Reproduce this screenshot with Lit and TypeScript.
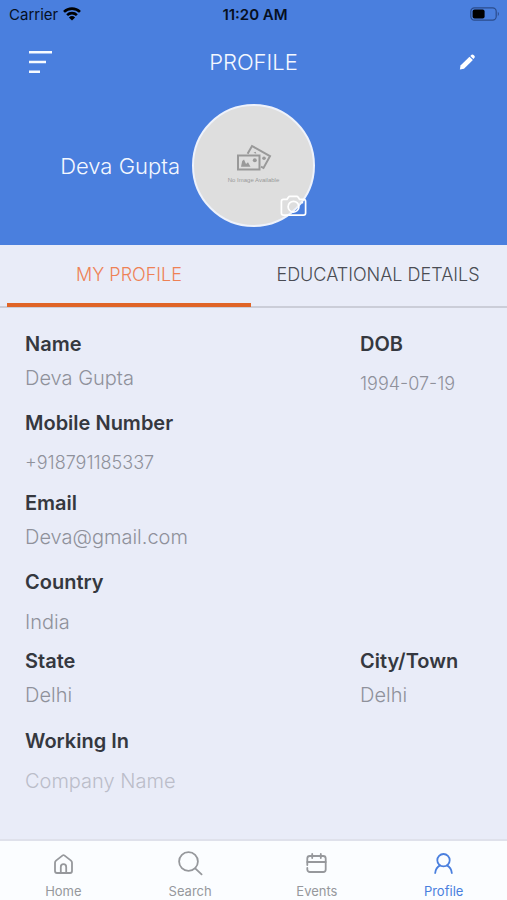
import { LitElement, html, css, svg } from "lit";
import { customElement, property, state } from "lit/decorators.js";
import { classMap } from "lit/directives/class-map.js";

interface Field {
  id: string;
  label: string;
  value: string;
  placeholder?: string;
  fixed?: boolean;
  low?: boolean;
  digits?: boolean;
}

const ROWS: Field[][] = [
  [
    { id: "name", label: "Name", value: "Deva Gupta" },
    { id: "dob", label: "DOB", value: "1994-07-19", fixed: true, low: true, digits: true },
  ],
  [{ id: "mobile", label: "Mobile Number", value: "+918791185337", fixed: true, low: true, digits: true }],
  [{ id: "email", label: "Email", value: "Deva@gmail.com" }],
  [{ id: "country", label: "Country", value: "India", fixed: true, low: true }],
  [
    { id: "state", label: "State", value: "Delhi" },
    { id: "city", label: "City/Town", value: "Delhi" },
  ],
  [{ id: "work", label: "Working In", value: "", placeholder: "Company Name", low: true }],
];

@customElement("status-bar")
export class StatusBar extends LitElement {
  static styles = css`
    :host {
      display: grid;
      grid-template-columns: 1fr auto 1fr;
      align-items: center;
      height: 28px;
      padding: 0 6px 0 9px;
      color: #06101f;
      font-size: 15px;
    }
    .carrier {
      display: flex;
      align-items: center;
      gap: 5px;
    }
    .time {
      font-weight: 600;
    }
    .battery {
      justify-self: end;
    }
    svg {
      display: block;
    }
  `;
  render() {
    return html`
      <span class="carrier">
        Carrier
        <svg width="18" height="14" viewBox="0 0 18 14" aria-hidden="true">
          <g fill="none" stroke="#000" stroke-width="2.6">
            <path d="M1 4.9 A11.4 11.4 0 0 1 17 4.9" />
            <path d="M4.1 8.1 A7 7 0 0 1 13.9 8.1" />
          </g>
          <path d="M9 13.6 L5.9 10.5 A4.5 4.5 0 0 1 12.1 10.5 Z" fill="#000" />
        </svg>
      </span>
      <span class="time">11:20 AM</span>
      <svg class="battery" width="31" height="14" viewBox="0 0 31 14" aria-hidden="true">
        <rect x="0.8" y="0.8" width="25.4" height="12.4" rx="3.6" fill="none" stroke="#2b4c8c" stroke-width="1.2" />
        <rect x="2.6" y="2.6" width="12" height="8.8" rx="2" fill="#000" />
        <path d="M27.8 4.8 Q30 7 27.8 9.2 Z" fill="#2b4c8c" />
      </svg>
    `;
  }
}

@customElement("profile-header")
export class ProfileHeader extends LitElement {
  @property() name = "";
  static styles = css`
    :host {
      display: block;
      height: 245px;
      background: #4a7fde;
      color: #f4f8ff;
    }
    .bar {
      display: grid;
      grid-template-columns: 1fr auto 1fr;
      align-items: center;
      height: 68px;
      padding: 0 29px;
    }
    h1 {
      margin: 0;
      font-size: 22px;
      font-weight: 300;
    }
    button {
      display: block;
      padding: 0;
      border: 0;
      background: none;
      cursor: pointer;
    }
    svg {
      display: block;
    }
    .edit {
      justify-self: end;
    }
    .person {
      display: grid;
      grid-template-columns: 1fr auto 1fr;
      align-items: center;
      margin-top: 8px;
    }
    .name {
      justify-self: end;
      padding-right: 12px;
      font-size: 22px;
      font-weight: 300;
    }
    .avatar {
      position: relative;
      box-sizing: border-box;
      width: 123px;
      height: 123px;
      padding-bottom: 4px;
      border: 2px solid #eef2fb;
      border-radius: 50%;
      background: #dedede;
      display: flex;
      flex-direction: column;
      align-items: center;
      justify-content: center;
      gap: 6px;
      color: #999;
      font: 6px "Liberation Sans", sans-serif;
    }
    .camera {
      position: absolute;
      right: 6px;
      bottom: 8px;
    }
  `;
  render() {
    return html`
      <status-bar></status-bar>
      <div class="bar">
        <button aria-label="Menu">
          <svg width="24" height="24" viewBox="0 0 24 24">
            <path d="M0 2.3H23M0 12H17M0 21.7H11" stroke="#f8fbff" stroke-width="2.4" />
          </svg>
        </button>
        <h1>PROFILE</h1>
        <button class="edit" aria-label="Edit">
          <svg width="20" height="20" viewBox="0 0 20 20" fill="#fff">
            <path d="M1.9 17.4 L2.5 13.5 L11.5 4.8 L14.9 8.1 L6 16.7 Z" />
            <path d="M12.3 4 L13.6 2.8 Q14.6 2 15.6 2.9 L16.4 3.8 Q17.3 4.8 16.5 5.8 L15.4 7.1 Z" />
          </svg>
        </button>
      </div>
      <div class="person">
        <span class="name">${this.name}</span>
        <div class="avatar">
          <svg width="36" height="27" viewBox="0 0 36 27" aria-hidden="true">
            <g fill="none" stroke="#999" stroke-width="2">
              <path d="M11.6 9.8 L16 2 L34 12.2 L27.5 24 L25 22.6" />
              <rect x="2" y="11.5" width="21.5" height="14" />
            </g>
            <path d="M5 22.8 L6.2 17 L8 15.6 L10 20 L12 18.2 L14.5 22.8 Z" fill="#999" />
            <circle cx="18.8" cy="16.3" r="2" fill="#999" />
            <circle cx="28" cy="14.2" r="1.8" fill="#999" />
            <path d="M17.5 8.8 l2.2 -1 l0.6 2 z" fill="#999" />
          </svg>
          <span>No Image Available</span>
          <button class="camera" aria-label="Change photo">
            <svg width="27" height="22" viewBox="0 0 27 22" fill="none" stroke="#fff" stroke-width="1.7">
              <path
                d="M3.5 4.3 H7 L8.6 2 Q9 1.3 9.8 1.3 H16.8 Q17.6 1.3 18 2 L19.6 4.3 H23.5 Q25.6 4.3 25.6 6.4 V18 Q25.6 20.1 23.5 20.1 H3.5 Q1.4 20.1 1.4 18 V6.4 Q1.4 4.3 3.5 4.3 Z"
              />
              <circle cx="13.5" cy="11.7" r="5.4" />
              <path d="M21.6 7.6 h1.6" />
            </svg>
          </button>
        </div>
      </div>
    `;
  }
}

@customElement("profile-tabs")
export class ProfileTabs extends LitElement {
  @state() private active = 0;
  static styles = css`
    :host {
      display: block;
      padding: 0 7px;
      border-bottom: 2px solid #cbcdd8;
    }
    .tabs {
      display: grid;
      grid-template-columns: 1fr 1fr;
      gap: 5px;
      margin-bottom: -1px;
    }
    button {
      height: 62px;
      padding: 1px 0 0;
      border: 0;
      border-bottom: 4px solid transparent;
      background: none;
      color: #4a4c54;
      font: 300 18px Inter, sans-serif;
      white-space: nowrap;
      cursor: pointer;
    }
    .on {
      border-bottom-color: #e06427;
      color: #ee8155;
    }
  `;
  render() {
    return html`<div class="tabs" role="tablist">
      ${["MY PROFILE", "EDUCATIONAL DETAILS"].map(
        (t, i) => html`<button
          role="tab"
          aria-selected=${i === this.active}
          class=${classMap({ on: i === this.active })}
          @click=${() => (this.active = i)}
        >
          ${t}
        </button>`
      )}
    </div>`;
  }
}

@customElement("profile-form")
export class ProfileForm extends LitElement {
  static styles = css`
    :host {
      display: block;
    }
    form {
      box-sizing: border-box;
      height: 100%;
      display: grid;
      grid-auto-rows: 1fr;
      padding: 24px 25px 31px;
    }
    .row {
      display: grid;
      grid-template-columns: 335fr 122fr;
    }
    .field {
      display: flex;
      flex-direction: column;
      gap: 10px;
      min-width: 0;
    }
    .low {
      gap: 16px;
    }
    label {
      color: #35383f;
      font-size: 20px;
      line-height: 24px;
      font-weight: 600;
    }
    input {
      box-sizing: border-box;
      width: 100%;
      height: 24px;
      padding: 0;
      border: 0;
      outline: 0;
      background: none;
      color: #8f919b;
      font: 300 20px/24px Inter, sans-serif;
    }
    .digits input {
      font-size: 18px;
    }
    input::placeholder {
      color: #bbbdc9;
      opacity: 1;
    }
  `;
  render() {
    return html`<form>
      ${ROWS.map(
        (row) => html`<div class="row">
          ${row.map(
            (f) => html`<div class=${classMap({ field: true, low: !!f.low, digits: !!f.digits })}>
              <label for=${f.id}>${f.label}</label>
              <input id=${f.id} .value=${f.value} placeholder=${f.placeholder ?? ""} ?readonly=${!!f.fixed} />
            </div>`
          )}
        </div>`
      )}
    </form>`;
  }
}

const NAV = [
  {
    label: "Home",
    icon: svg`<path d="M5 9.6 L11.7 4.4 Q12.5 3.8 13.3 4.4 L20 9.6 Q21 10.5 21 11.8 V20 Q21 22 19 22 H6 Q4 22 4 20 V11.8 Q4 10.5 5 9.6 Z"/><path d="M9.8 22 V16 Q9.8 13.2 12.5 13.2 Q15.2 13.2 15.2 16 V22"/>`,
  },
  {
    label: "Search",
    icon: svg`<circle cx="10.5" cy="10.5" r="9.4"/><path d="M17.2 17.4 L23.6 23.4"/>`,
  },
  {
    label: "Events",
    icon: svg`<path d="M3.3 14 V7.5 Q3.3 5 5.8 5 H19.2 Q21.7 5 21.7 7.5 V18.5 Q21.7 21 19.2 21 H5.8 Q3.7 21 3.3 18.6 V17"/><path d="M3.3 11 H21.7 M8.2 3 V7 M16.8 3 V7"/>`,
  },
  {
    label: "Profile",
    icon: svg`<circle cx="12.5" cy="9.2" r="6.2"/><path d="M4.2 22 Q4.8 16.6 9 14.4 M20.8 22 Q20.2 16.6 16 14.4"/>`,
  },
];

@customElement("bottom-nav")
export class BottomNav extends LitElement {
  static styles = css`
    nav {
      display: grid;
      grid-template-columns: repeat(4, 1fr);
      height: 59px;
      border-top: 2px solid #dfe1eb;
      background: #fbfdff;
    }
    a {
      display: flex;
      flex-direction: column;
      align-items: center;
      gap: 7px;
      padding-top: 10px;
      color: #96989c;
      font-size: 13px;
      line-height: 16px;
      text-decoration: none;
    }
    svg {
      display: block;
      fill: none;
      stroke: currentColor;
      stroke-width: 1.8;
      stroke-linecap: round;
    }
    .on {
      color: #4a7fde;
    }
  `;
  render() {
    return html`<nav>
      ${NAV.map(
        (n) => html`<a href="#${n.label.toLowerCase()}" class=${classMap({ on: n.label === "Profile" })}>
          <svg width="25" height="25" viewBox="0 0 25 25" aria-hidden="true">${n.icon}</svg>
          ${n.label}
        </a>`
      )}
    </nav>`;
  }
}

@customElement("app-root")
export class AppRoot extends LitElement {
  static styles = css`
    :host {
      display: flex;
      flex-direction: column;
      min-height: 100vh;
      background: #e9ecf8;
      font-family: Inter, sans-serif;
    }
    profile-form {
      flex: 1;
      display: grid;
    }
  `;
  render() {
    return html`
      <profile-header name="Deva Gupta"></profile-header>
      <profile-tabs></profile-tabs>
      <profile-form></profile-form>
      <bottom-nav></bottom-nav>
    `;
  }
}
